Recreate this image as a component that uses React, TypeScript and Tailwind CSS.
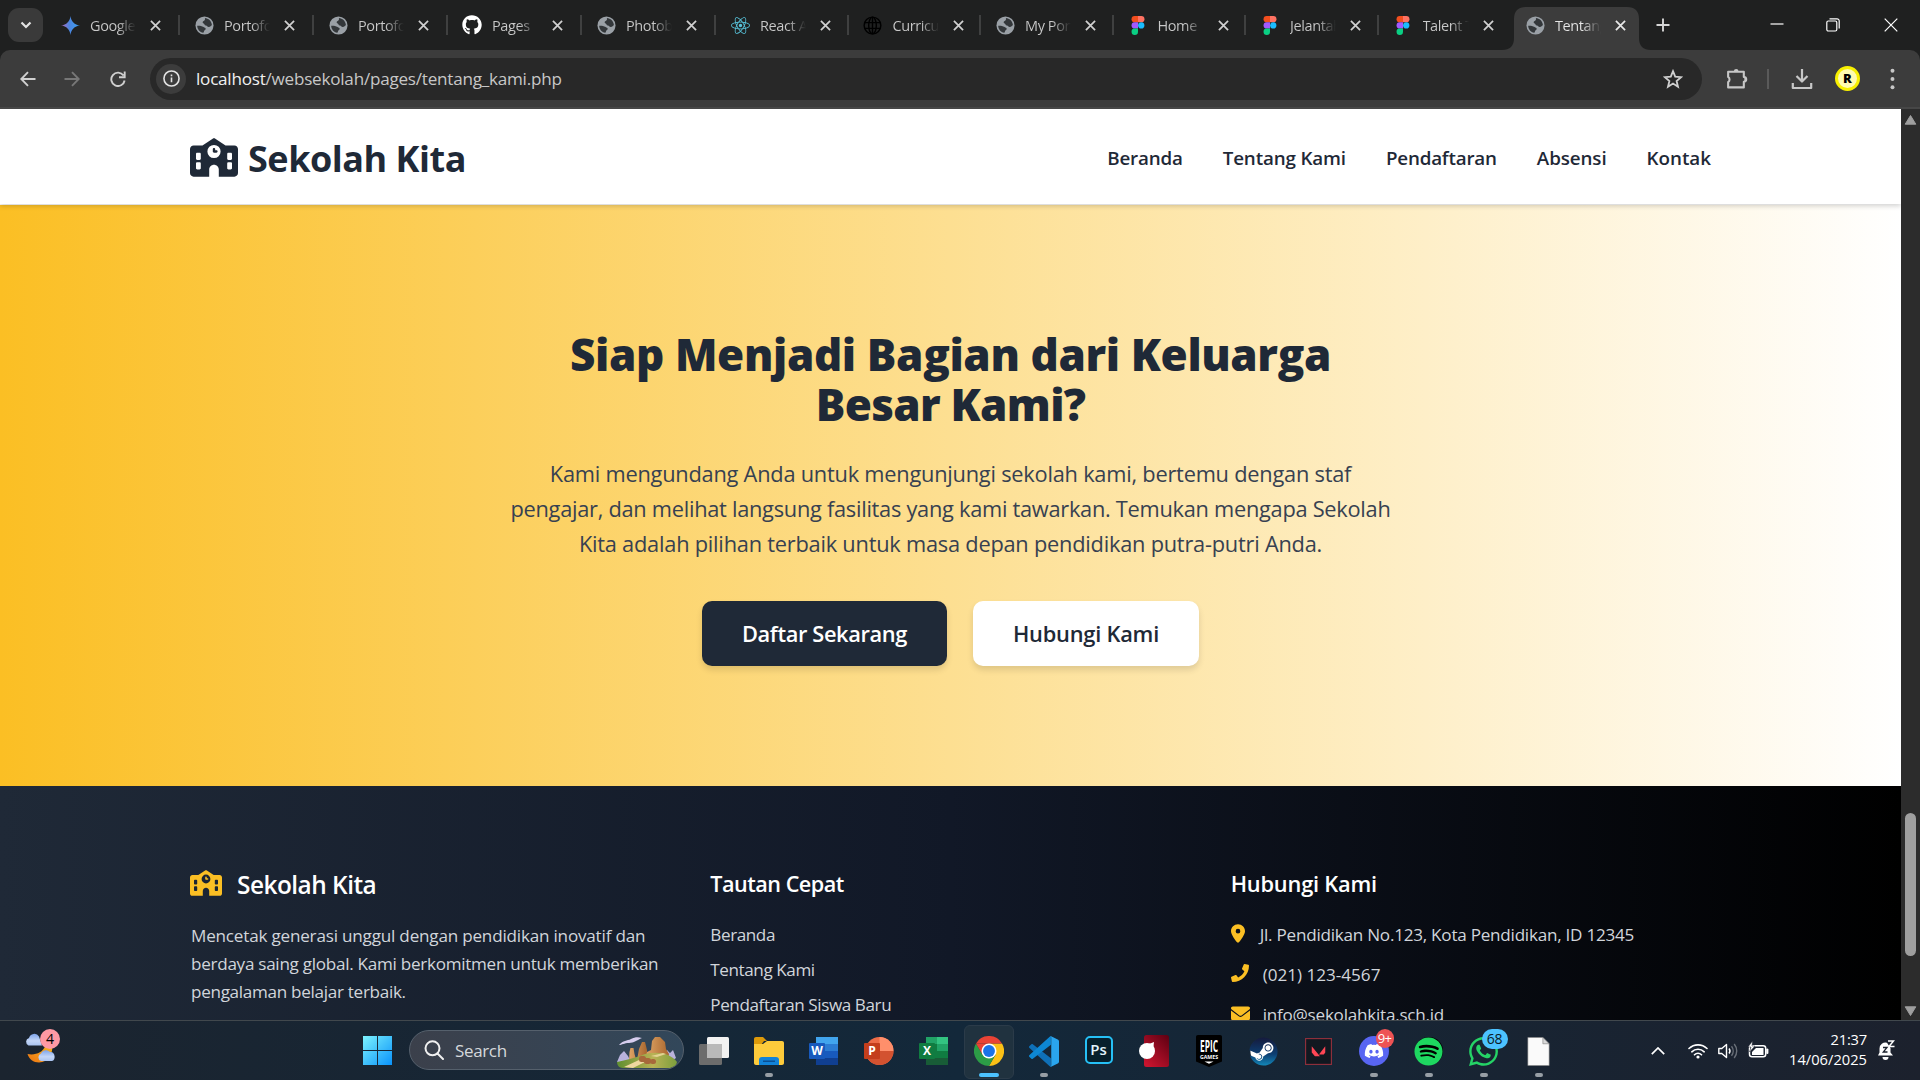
import type { ReactNode } from "react";
import { FaPhone } from "react-icons/fa";
import {
  FaSchool,
  FaLocationDot,
  FaEnvelope,
  FaGithub,
  FaReact,
  FaDiscord,
  FaSpotify,
  FaWhatsapp,
  FaSteam,
} from "react-icons/fa6";

/* ---------- Tab favicons ---------- */

const GlobeIcon = () => (
  <svg viewBox="0 0 20 20" className="size-[19px]">
    <circle cx="10" cy="10" r="9.5" fill="#9aa0a6" />
    <path
      d="M10.4 2.2c3.800.4 6.900 3.200 7.400 7.100-.8 1.500-2 2.300-3.400 2.200-1.600-.1-1.500-1.500-2.900-1.600-1.800-.1-1.300-1.700-2.400-2.100-1.200-.4-1.400-1.500-.4-2.200 1.300-.9 2.300-1.300 1.700-3.400z"
      fill="#33373a"
    />
    <path
      d="M2.300 10.200c2.300-.2 4.900.2 6.200 1.200 1.200 1 3 .7 2.700 2.300-.2 1.200-1.600 1.200-1.700 2.400-.1.700-.4 1.300-.9 1.600-3.500-.7-6.300-3.800-6.300-7.500z"
      fill="#33373a"
    />
  </svg>
);

const GeminiIcon = () => (
  <svg viewBox="0 0 20 20" className="size-[19px]">
    <defs>
      <linearGradient id="gem" x1="0" x2="1">
        <stop offset="0.1" stopColor="#9b6fc4" />
        <stop offset="0.45" stopColor="#4b86e0" />
        <stop offset="1" stopColor="#3ba0f0" />
      </linearGradient>
    </defs>
    <path d="M10 0c.7 5.800 4.200 9.300 10 10-5.800.7-9.300 4.200-10 10-.7-5.800-4.200-9.300-10-10 5.800-.7 9.300-4.200 10-10z" fill="url(#gem)" />
  </svg>
);

const FigmaIcon = () => (
  <svg viewBox="0 0 14 20" className="h-[19px] w-[14px]">
    <path d="M3.500 0H7v6.600H3.500a3.300 3.300 0 0 1 0-6.600z" fill="#f24e1e" />
    <path d="M7 0h3.500a3.300 3.300 0 0 1 0 6.600H7z" fill="#ff7262" />
    <path d="M3.500 6.600H7v6.600H3.500a3.300 3.300 0 0 1 0-6.600z" fill="#a259ff" />
    <circle cx="10.400" cy="9.900" r="3.300" fill="#1abcfe" />
    <path d="M3.500 13.200H7v3.400a3.400 3.400 0 1 1-3.500-3.400z" fill="#0acf83" />
  </svg>
);

const WireGlobe = () => (
  <svg viewBox="0 0 20 20" className="size-[19px]" fill="none" stroke="#000" strokeWidth="1.500">
    <circle cx="10" cy="10" r="8.800" />
    <ellipse cx="10" cy="10" rx="4" ry="8.800" />
    <path d="M10 1v18M1.500 7h17M1.500 13h17" />
  </svg>
);

const CloseIcon = ({ className }: { className: string }) => (
  <svg viewBox="0 0 12 12" className={className} stroke="currentColor" strokeWidth="1.900">
    <path d="M1 1l10 10M11 1L1 11" />
  </svg>
);

const tabs: { title: string; icon: ReactNode }[] = [
  { title: "Google Gemini", icon: <GeminiIcon /> },
  { title: "Portofolio", icon: <GlobeIcon /> },
  { title: "Portofolio", icon: <GlobeIcon /> },
  { title: "Pages", icon: <FaGithub className="size-[20px] text-white" /> },
  { title: "Photobooth", icon: <GlobeIcon /> },
  { title: "React App", icon: <FaReact className="size-[19px] text-[#58c4dc]" /> },
  { title: "Curriculum", icon: <WireGlobe /> },
  { title: "My Portfolio", icon: <GlobeIcon /> },
  { title: "Home", icon: <FigmaIcon /> },
  { title: "Jelantah", icon: <FigmaIcon /> },
  { title: "Talent Test", icon: <FigmaIcon /> },
  { title: "Tentang", icon: <GlobeIcon /> },
];

function TabBody({ title, icon, active }: { title: string; icon: ReactNode; active?: boolean }) {
  return (
    <>
      <span className="ml-[14px] flex w-5 justify-center">{icon}</span>
      <span
        className={`ml-[10px] w-[46px] overflow-hidden whitespace-nowrap bg-clip-text pt-px text-[14.500px] leading-6 tracking-[-0.400px] text-transparent ${
          active
            ? "bg-linear-to-r from-[#e6e6e6] from-60% to-[#3c3c3c]"
            : "bg-linear-to-r from-[#c9c9c9] from-60% to-[#1f2020]"
        }`}
      >
        {title}
      </span>
      <CloseIcon className={`ml-[14px] size-[11px] ${active ? "text-[#e8e8e8]" : "text-[#d0d0d0]"}`} />
    </>
  );
}

function TabStrip() {
  return (
    <div className="flex h-[50px] w-full bg-[#1f2020]">
      <div className="flex w-[46px] shrink-0 items-center pl-2">
        <div className="flex h-[34px] w-[35px] items-center justify-center rounded-[11px] bg-[#3a3a3a]">
          <svg viewBox="0 0 12 8" className="h-[8px] w-[12px]" fill="none" stroke="#e3e3e3" strokeWidth="2.200">
            <path d="M1.500 1.500L6 6l4.500-4.500" />
          </svg>
        </div>
      </div>
      {tabs.map((t, i) =>
        i < tabs.length - 1 ? (
          <div key={i} className={`flex h-[50px] shrink-0 items-center ${i < 5 ? "w-[134px]" : "w-[132.500px]"}`}>
            <TabBody {...t} />
            <span className={`ml-auto h-5 w-[2px] ${i < tabs.length - 2 ? "bg-[#3f4040]" : "bg-transparent"}`} />
          </div>
        ) : (
          <div key={i} className="relative flex h-[50px] w-[133px] shrink-0 items-center">
            <svg viewBox="0 0 149 43" className="absolute bottom-0 left-[-9px] h-[43px] w-[149px]">
              <path d="M0 43C8 43 12 39 12 31V12C12 4 16 0 24 0h101c8 0 12 4 12 12v19c0 8 4 12 12 12z" fill="#3c3c3c" />
            </svg>
            <div className="relative flex w-full items-center">
              <TabBody {...t} active />
            </div>
          </div>
        ),
      )}
      <div className="flex flex-1 items-center">
        <svg viewBox="0 0 14 14" className="ml-[12px] size-[14px]" stroke="#d6d6d6" strokeWidth="1.900">
          <path d="M7 0.500v13M0.500 7h13" />
        </svg>
        <svg viewBox="0 0 14 14" className="ml-[100px] size-[14px]" stroke="#fff" strokeWidth="1.200">
          <path d="M0.500 6h13" />
        </svg>
        <svg viewBox="0 0 14 14" className="ml-[42px] size-[14px]" fill="none" stroke="#fff" strokeWidth="1.200">
          <rect x="0.800" y="3" width="10" height="10" rx="1.500" />
          <path d="M3.500 0.800h7.500a2.200 2.200 0 0 1 2.200 2.200v7.500" />
        </svg>
        <svg viewBox="0 0 14 14" className="ml-[44px] size-[14px]" stroke="#fff" strokeWidth="1.200">
          <path d="M0.700 0.700l12.600 12.600M13.300 0.700L0.700 13.300" />
        </svg>
      </div>
    </div>
  );
}

function Toolbar() {
  return (
    <div className="w-full bg-[#1f2020]">
      <div className="flex h-[59px] w-full items-center rounded-t-[10px] border-b-2 border-[#474747] bg-[#3c3c3c]">
        <svg viewBox="0 0 16 16" className="ml-[20px] size-[16px]" fill="none" stroke="#d0d0d0" strokeWidth="1.900">
          <path d="M15.500 8H1.500M8 1.200L1.300 8 8 14.800" />
        </svg>
        <svg viewBox="0 0 16 16" className="ml-[28px] size-[16px]" fill="none" stroke="#777" strokeWidth="1.900">
          <path d="M0.500 8h14M8 1.200L14.700 8 8 14.800" />
        </svg>
        <svg viewBox="0 0 16 16" className="ml-[30px] size-[16px]" fill="none" stroke="#d0d0d0" strokeWidth="1.900">
          <path d="M13.500 4.500A6.700 6.700 0 1 0 14.600 9.500M14.700 0.500v5.700H9" />
        </svg>
        <div className="ml-[24px] flex h-[42px] w-[1552px] items-center rounded-full bg-[#282828]">
          <div className="ml-[6px] flex size-[30px] items-center justify-center rounded-full bg-[#3c3c3c]">
            <svg viewBox="0 0 18 18" className="size-[17px]" fill="none" stroke="#e3e3e3" strokeWidth="1.700">
              <circle cx="9" cy="9" r="8" />
              <path d="M9 8v5M9 4.800v1.700" />
            </svg>
          </div>
          <p className="ml-[10px] flex-1 whitespace-nowrap pt-px text-[17.100px] leading-6 tracking-[-0.230px] text-[#c7c7c7]">
            <span className="text-[#f1f1f1]">localhost</span>/websekolah/pages/tentang_kami.php
          </p>
          <svg viewBox="0 0 20 20" className="mr-[19px] size-[20px]" fill="none" stroke="#d0d0d0" strokeWidth="1.800">
            <path d="M10 2.200l2.200 5.500 5.900.5-4.500 3.800 1.400 5.700L10 14.600l-5 3.100 1.400-5.700L1.900 8.200l5.900-.5z" />
          </svg>
        </div>
        <svg viewBox="0 0 22 22" className="ml-[23px] size-[23px]" fill="none" stroke="#c7c7c7" strokeWidth="2">
          <path d="M3 4.500h15v5a2.200 2.200 0 0 1 0 4.600v5.400H3v-5a3 3 0 0 0 0-5z" strokeLinejoin="round" />
          <path d="M8.500 4a2.200 2.200 0 0 1 4.400 0zM18.500 9.700a2.200 2.200 0 0 1 0 4.200z" fill="#c7c7c7" stroke="none" />
        </svg>
        <span className="ml-[19px] h-5 w-[2px] bg-[#5a5a5a]" />
        <svg viewBox="0 0 22 22" className="ml-[22px] size-[22px]" fill="none" stroke="#c7c7c7" strokeWidth="2.200">
          <path d="M11 1v12M5.500 8l5.500 5.500L16.500 8M1.800 15v5h18.400v-5" strokeLinejoin="round" />
        </svg>
        <div className="ml-[22px] flex size-[25px] items-center justify-center rounded-full border-[3px] border-[#f8f000] bg-[#fffbb0] text-[13px] font-extrabold text-black">
          R
        </div>
        <svg viewBox="0 0 4 20" className="ml-[30px] h-[22px] w-[5px]" fill="#c7c7c7">
          <circle cx="2" cy="2.500" r="1.800" />
          <circle cx="2" cy="10" r="1.800" />
          <circle cx="2" cy="17.500" r="1.800" />
        </svg>
      </div>
    </div>
  );
}

/* ---------- Web page ---------- */

function SiteHeader() {
  return (
    <header className="relative z-10 flex h-[95px] w-full shrink-0 items-center justify-between bg-white px-[190px] pt-[2px] text-[#1f2937] shadow-[0_2px_5px_rgba(0,0,0,0.180)]">
      <div className="flex items-center">
        <FaSchool className="h-[39px] w-[48px]" />
        <span className="ml-[10px] pt-[2px] text-[36px] font-bold leading-[44px] tracking-[-0.480px]">Sekolah Kita</span>
      </div>
      <nav className="flex gap-[40px] pt-px text-[18.800px] font-semibold leading-7">
        <a className="tracking-[-0.180px]">Beranda</a>
        <a className="tracking-[-0.150px]">Tentang Kami</a>
        <a className="tracking-[-0.180px]">Pendaftaran</a>
        <a className="tracking-[-0.100px]">Absensi</a>
        <a className="tracking-normal">Kontak</a>
      </nav>
    </header>
  );
}

function Hero() {
  return (
    <section className="flex h-[581px] w-full shrink-0 flex-col items-center bg-linear-to-r/srgb from-[#fbbf24] to-white pt-[124px] text-center">
      <h1 className="whitespace-nowrap text-[44px] font-extrabold leading-[50px] tracking-[-0.380px] text-[#1f2937]">
        Siap Menjadi Bagian dari Keluarga
        <br />
        <span className="tracking-[-0.700px]">Besar Kami?</span>
      </h1>
      <p className="mt-[27px] whitespace-nowrap text-[21.800px] leading-[35px] tracking-[-0.230px] text-[#374151]">
        Kami mengundang Anda untuk mengunjungi sekolah kami, bertemu dengan staf
        <br />
        <span className="tracking-[-0.275px]">
          pengajar, dan melihat langsung fasilitas yang kami tawarkan. Temukan mengapa Sekolah
        </span>
        <br />
        Kita adalah pilihan terbaik untuk masa depan pendidikan putra-putri Anda.
      </p>
      <div className="mt-[40px] flex gap-[26px] whitespace-nowrap text-[21.800px] font-semibold">
        <a className="flex h-[65px] w-[245px] items-center justify-center rounded-[10px] bg-[#1f2937] pt-[2px] tracking-[-0.360px] text-white shadow-[0_4px_6px_rgba(0,0,0,0.120)]">
          Daftar Sekarang
        </a>
        <a className="flex h-[65px] w-[226px] items-center justify-center rounded-[10px] bg-white pt-[2px] tracking-[-0.220px] text-[#1f2937] shadow-[0_4px_6px_rgba(0,0,0,0.120)]">
          Hubungi Kami
        </a>
      </div>
    </section>
  );
}

function SiteFooter() {
  return (
    <footer className="grid w-full flex-1 grid-cols-3 gap-[40px] whitespace-nowrap bg-linear-to-r/srgb from-[#1f2937] via-[#111827] to-black px-[190px] pt-[80px] text-[17.100px] text-[#d1d5db]">
      <div>
        <div className="flex h-[38px] items-center">
          <FaSchool className="mb-[4px] h-[26px] w-[32px] text-[#fbbf24]" />
          <span className="ml-[15px] text-[24.400px] font-semibold leading-[38px] tracking-[-0.500px] text-white">
            Sekolah Kita
          </span>
        </div>
        <p className="mt-[18px] pl-px leading-[28px] tracking-[-0.200px]">
          Mencetak generasi unggul dengan pendidikan inovatif dan
          <br />
          <span className="tracking-[-0.280px]">berdaya saing global. Kami berkomitmen untuk memberikan</span>
          <br />
          <span className="tracking-[-0.300px]">pengalaman belajar terbaik.</span>
        </p>
      </div>
      <div>
        <h3 className="text-[21.600px] font-semibold leading-[35px] tracking-[-0.500px] text-white">Tautan Cepat</h3>
        <ul className="mt-[20px] flex flex-col gap-[7px] leading-[28px] tracking-[-0.420px]">
          <li>Beranda</li>
          <li>Tentang Kami</li>
          <li>Pendaftaran Siswa Baru</li>
        </ul>
      </div>
      <div>
        <h3 className="text-[21.800px] font-semibold leading-[35px] tracking-[-0.200px] text-white">Hubungi Kami</h3>
        <ul className="mt-[20px] flex flex-col gap-[12px] leading-[28px] tracking-[-0.240px]">
          <li className="flex items-center">
            <FaLocationDot className="mb-[3px] h-[19px] w-[14px] text-[#fbbf24]" />
            <span className="ml-[15px]">Jl. Pendidikan No.123, Kota Pendidikan, ID 12345</span>
          </li>
          <li className="flex items-center">
            <FaPhone className="mb-[5px] size-[18px] text-[#fbbf24]" />
            <span className="ml-[14px] tracking-normal">(021) 123-4567</span>
          </li>
          <li className="flex items-center">
            <FaEnvelope className="mb-[4px] size-[19px] text-[#fbbf24]" />
            <span className="ml-[13px]">info@sekolahkita.sch.id</span>
          </li>
        </ul>
      </div>
    </footer>
  );
}

function Scrollbar() {
  return (
    <div className="flex w-[19px] shrink-0 flex-col items-center bg-[#2c2c2c]">
      <svg viewBox="0 0 12 10" className="mt-[6px] h-[10px] w-[13px]">
        <path d="M6 0.500l5.300 8.700H0.700z" fill="#9f9f9f" stroke="#9f9f9f" strokeLinejoin="round" />
      </svg>
      <div className="mt-[688px] h-[143px] w-[11px] rounded-full bg-[#9f9f9f]" />
      <svg viewBox="0 0 12 10" className="mt-[50px] h-[10px] w-[13px]">
        <path d="M6 9.500l5.300-8.700H0.700z" fill="#9f9f9f" stroke="#9f9f9f" strokeLinejoin="round" />
      </svg>
    </div>
  );
}

/* ---------- Taskbar icons ---------- */

const WeatherIcon = () => (
  <svg viewBox="0 0 34 36" className="h-[36px] w-[34px]">
    <defs>
      <linearGradient id="cloud" x1="0" y1="0" x2="0" y2="1">
        <stop offset="0" stopColor="#7ea4ea" />
        <stop offset="0.6" stopColor="#c3d6f7" />
        <stop offset="1" stopColor="#a9c3f0" />
      </linearGradient>
      <linearGradient id="moon" x1="1" y1="0" x2="0" y2="1">
        <stop offset="0" stopColor="#f6b823" />
        <stop offset="1" stopColor="#ec7412" />
      </linearGradient>
    </defs>
    <path d="M2.500 26c8 1.500 15-1.500 17.500-7.500l7.500-2C28 26 23 34.500 14 34.500 8.500 34.500 4 31 2.500 26z" fill="url(#moon)" />
    <path d="M3.500 17.500a4 4 0 0 1 .5-7.500 5.500 5.500 0 0 1 10-1.500l3 9z" fill="url(#cloud)" />
    <path d="M16 33a4 4 0 0 1 0-7.500c1-3 5.500-5 9-1.500 5-1 6.500 8 2 9z" fill="url(#cloud)" />
  </svg>
);

const WindowsIcon = () => (
  <svg viewBox="0 0 30 30" className="size-[29px]">
    <defs>
      <linearGradient id="win" x1="0" y1="0" x2="1" y2="1">
        <stop offset="0" stopColor="#7df3ff" />
        <stop offset="0.5" stopColor="#42c2fb" />
        <stop offset="1" stopColor="#0a93fb" />
      </linearGradient>
    </defs>
    <path d="M0 0h14.500v14.500H0zM15.500 0H30v14.500H15.500zM0 15.500h14.500V30H0zM15.500 15.500H30V30H15.500z" fill="url(#win)" />
  </svg>
);

const SearchScene = () => (
  <svg viewBox="0 0 60 32" className="h-[32px] w-[60px]">
    <defs>
      <linearGradient id="rock" x1="0" x2="1">
        <stop offset="0" stopColor="#e0a566" />
        <stop offset="1" stopColor="#a9672f" />
      </linearGradient>
      <linearGradient id="grass" x1="0" x2="1">
        <stop offset="0" stopColor="#5f8f2f" />
        <stop offset="0.6" stopColor="#b9b255" />
        <stop offset="1" stopColor="#7c9f3c" />
      </linearGradient>
    </defs>
    <path d="M2 9C6 4 10 5 14 3s7-2 11-1c-5 2-8 5-13 5S5 9 2 9z" fill="#d6cdee" />
    <path d="M0 26l3-7 4-4 4 5 3 6zM46 19l4-5 3 3 3-3 3 8-6 4z" fill="#b9b2dc" />
    <path d="M12 25l.5-9 1-4h3l1 6 2 7zM20 24l2-11 3-7h3l2 8v10z" fill="url(#rock)" />
    <path d="M29 20l1-4 4-2 1-9 3-4h5l5 5 1 7 3 5-1 4z" fill="url(#rock)" />
    <path d="M0 26c9-2 18-4 28-8 14-3 26 0 32 8-1 4-4 6-8 6H6c-4 0-6-3-6-6z" fill="url(#grass)" />
    <path d="M7 31l15-7 8 1-14 7z" fill="#efd7a0" />
    <path d="M34 20l12-3 3 1-9 3z" fill="#e3d393" />
    <g fill="#a7683b">
      <rect x="22" y="20" width="7" height="6" rx="2.500" />
      <rect x="27" y="22" width="7" height="6" rx="2.500" />
      <rect x="33" y="23" width="6" height="5" rx="2.500" />
    </g>
  </svg>
);

const TaskViewIcon = () => (
  <svg viewBox="0 0 30 30" className="size-[30px]">
    <rect x="8" y="1" width="22" height="21" rx="1.500" fill="#f2f2f2" />
    <rect x="0" y="8" width="23" height="21" rx="1.500" fill="#6c6c6c" />
    <path d="M8 8h15v14H8z" fill="#b9b9b9" />
  </svg>
);

const FolderIcon = () => (
  <svg viewBox="0 0 30 28" className="h-[28px] w-[30px]">
    <path d="M0 2C0 .8.8 0 2 0h7l4 4h-3l-3 4H0z" fill="#dd9a0a" />
    <path d="M0 7h9l4-3h15c1.200 0 2 .8 2 2v20c0 1.200-.8 2-2 2H2c-1.200 0-2-.8-2-2z" fill="#fdcb3b" />
    <path d="M5 28v-5c0-2 1-3 3-3h14c2 0 3 1 3 3v5z" fill="#1283d9" />
    <rect x="9" y="23.500" width="12" height="1.500" fill="#0a4f94" />
  </svg>
);

function OfficeIcon({ letter, kind }: { letter: string; kind: "word" | "ppt" | "excel" }) {
  return (
    <svg viewBox="0 0 30 28" className="h-[28px] w-[30px]">
      {kind === "word" && (
        <>
          <path d="M7 0h22v7H7z" fill="#41a5ee" />
          <path d="M7 7h22v7H7z" fill="#2b7cd3" />
          <path d="M7 14h22v7H7z" fill="#185abd" />
          <path d="M7 21h22v7H7z" fill="#103f91" />
          <rect x="0" y="6" width="16" height="16" rx="1" fill="#185abd" />
        </>
      )}
      {kind === "ppt" && (
        <>
          <circle cx="15.500" cy="14" r="14" fill="#ed6c47" />
          <path d="M15.500 0a14 14 0 0 1 14 14h-14z" fill="#ff8f6b" />
          <path d="M1.500 14h28a14 14 0 0 1-28 0z" fill="#d35230" />
          <rect x="0" y="6" width="16" height="16" rx="1" fill="#c43e1c" />
        </>
      )}
      {kind === "excel" && (
        <>
          <path d="M7 0h11v7H7z" fill="#21a366" />
          <path d="M18 0h11v7H18z" fill="#33c481" />
          <path d="M7 7h11v14H7z" fill="#107c41" />
          <path d="M18 7h11v7H18z" fill="#21a366" />
          <path d="M18 14h11v7H18z" fill="#107c41" />
          <path d="M7 21h22v7H7z" fill="#185c37" />
          <rect x="0" y="6" width="16" height="16" rx="1" fill="#107c41" />
        </>
      )}
      <text x="8" y="18" textAnchor="middle" fontSize="12" fontWeight="700" fill="#fff">
        {letter}
      </text>
    </svg>
  );
}

const ChromeIcon = () => (
  <svg viewBox="0 0 48 48" className="size-[30px]">
    <path d="M44.800 12A24 24 0 0 1 24 48l10.400-18L24 12z" fill="#fbc116" />
    <path d="M3.200 12A24 24 0 0 0 24 48l10.400-18L13.600 30z" fill="#2c9c46" />
    <path d="M3.200 12A24 24 0 0 1 44.800 12H24z" fill="#ea4335" />
    <path d="M3.200 12l10.400 18L24 24V12z" fill="#ea4335" />
    <circle cx="24" cy="24" r="12" fill="#fff" />
    <circle cx="24" cy="24" r="9.500" fill="#1a73e8" />
  </svg>
);

const VSCodeIcon = () => (
  <svg viewBox="0 0 100 100" className="size-[31px]">
    <path d="M4 33l7-6c1.500-1.200 3-1.200 4.500 0L74 72v27c-2 0-3.500-.8-5-2L4 38c-1.500-1.500-1.500-3.500 0-5z" fill="#0f70b7" />
    <path d="M4 67l7 6c1.500 1.200 3 1.200 4.500 0L74 28V1c-2 0-3.500.8-5 2L4 62c-1.500 1.500-1.500 3.500 0 5z" fill="#0d87d3" />
    <path d="M71 1.500c1.500-.7 3-.6 5 .3l20 9.700c2 1 4 3 4 5.500v66c0 2.500-2 4.500-4 5.500l-20 9.700c-2 .9-3.500 1-5 .3 2 0 4-1.500 4-4V5.500c0-2.500-2-4-4-4z" fill="#2aa5ee" />
  </svg>
);

const PhotoshopIcon = () => (
  <div className="mb-[3px] flex size-[28px] items-center justify-center rounded-[5px] border-2 border-[#26c0f5] bg-[#07202c] text-[15px] font-semibold leading-none text-[#e2f4fc]">
    Ps
  </div>
);

const RedCardIcon = () => (
  <svg viewBox="0 0 30 32" className="h-[32px] w-[30px]">
    <defs>
      <linearGradient id="red" x1="1" y1="0" x2="0.2" y2="1">
        <stop offset="0" stopColor="#5c0012" />
        <stop offset="1" stopColor="#c9142e" />
      </linearGradient>
    </defs>
    <rect x="5" y="0" width="25" height="32" rx="2.500" fill="url(#red)" />
    <circle cx="8" cy="16" r="8" fill="#fff" />
    <path d="M10 9l5-2-1 8z" fill="#fff" />
  </svg>
);

const EpicIcon = () => (
  <svg viewBox="0 0 26 32" className="h-[32px] w-[26px]">
    <path d="M2 0h22c1.300 0 2 .8 2 2v24.500L13 32 0 26.500V2C0 .8.700 0 2 0z" fill="#000" />
    <path d="M8.500 26.500h9L13 28.700z" fill="#fff" />
    <text x="13" y="16.500" textAnchor="middle" fontSize="16" fontWeight="700" textLength="18" lengthAdjust="spacingAndGlyphs" fill="#fff">
      EPIC
    </text>
    <text x="13" y="23.500" textAnchor="middle" fontSize="5.500" fontWeight="700" textLength="18" lengthAdjust="spacingAndGlyphs" fill="#fff">
      GAMES
    </text>
  </svg>
);

const SteamIcon = () => (
  <svg viewBox="0 0 30 30" className="size-[29px]">
    <defs>
      <linearGradient id="steam" x1="0" y1="0" x2="0" y2="1">
        <stop offset="0" stopColor="#151a3c" />
        <stop offset="0.6" stopColor="#0d3f73" />
        <stop offset="1" stopColor="#1387b8" />
      </linearGradient>
    </defs>
    <circle cx="15" cy="15" r="13.500" fill="#fff" />
    <FaSteam size={30} fill="url(#steam)" />
  </svg>
);

const ValorantIcon = () => (
  <svg viewBox="0 0 28 28" className="size-[27px]">
    <rect x="0.600" y="0.600" width="26.800" height="26.800" fill="#111820" stroke="#8d2f3b" strokeWidth="1.200" />
    <path d="M7 8.500l8.500 10.500h-5.200L7 15zM21 8.500V15l-1.500 2h-5z" fill="#ff4655" />
  </svg>
);

const DocIcon = () => (
  <svg viewBox="0 0 23 30" className="h-[29px] w-[23px]">
    <path d="M0.500 0.500H16L22.500 7v22.500h-22z" fill="#fafafa" stroke="#888" strokeWidth="0.600" />
    <path d="M16 0.500V7h6.500z" fill="#d9d9d9" stroke="#777" strokeWidth="0.600" />
  </svg>
);

const apps: { icon: ReactNode; running?: boolean; active?: boolean; badge?: ReactNode }[] = [
  { icon: <TaskViewIcon /> },
  { icon: <FolderIcon />, running: true },
  { icon: <OfficeIcon letter="W" kind="word" /> },
  { icon: <OfficeIcon letter="P" kind="ppt" /> },
  { icon: <OfficeIcon letter="X" kind="excel" /> },
  { icon: <ChromeIcon />, active: true },
  { icon: <VSCodeIcon />, running: true },
  { icon: <PhotoshopIcon /> },
  { icon: <RedCardIcon /> },
  { icon: <EpicIcon /> },
  { icon: <SteamIcon /> },
  { icon: <ValorantIcon /> },
  {
    icon: (
      <span className="flex size-[30px] items-center justify-center rounded-full bg-[#5865f2]">
        <FaDiscord className="size-[20px] text-white" />
      </span>
    ),
    running: true,
    badge: (
      <span className="absolute left-[26px] top-[-3px] flex h-[19px] w-[18px] items-center justify-center rounded-full bg-[#ee5354] text-[13px] leading-none tracking-[-0.800px] text-white">
        9+
      </span>
    ),
  },
  {
    icon: (
      <span className="flex size-[28px] items-center justify-center rounded-full bg-black">
        <FaSpotify className="size-[29px] shrink-0 text-[#1ed760]" />
      </span>
    ),
    running: true,
  },
  {
    icon: <FaWhatsapp className="size-[33px] text-[#25d366]" />,
    running: true,
    badge: (
      <span className="absolute left-[22px] top-[-3px] flex h-[20px] w-[26px] items-center justify-center rounded-full bg-[#4cc2ff] text-[14px] leading-none tracking-[-0.300px] text-[#0b1a26]">
        68
      </span>
    ),
  },
  { icon: <DocIcon />, running: true },
];

function Taskbar() {
  return (
    <div className="flex h-[60px] w-full items-start border-t border-[#41484d] bg-linear-to-r/srgb from-[#1b242f] via-[#13283a] to-[#1c212d]">
      <div className="relative ml-[25px] mt-[7px] w-[40px]">
        <WeatherIcon />
        <span className="absolute left-[15px] top-px flex size-[20px] items-center justify-center rounded-full bg-[#ff99a4] text-[14px] leading-none text-black">
          4
        </span>
      </div>
      <div className="ml-[298px] mt-[15px]">
        <WindowsIcon />
      </div>
      <div className="ml-[17px] mt-[9px] flex h-[40px] w-[275px] items-center overflow-hidden rounded-full border border-[#55606c] bg-linear-to-r from-[#3b404b] to-[#32475a]">
        <svg viewBox="0 0 20 20" className="ml-[14px] size-[20px]" fill="none" stroke="#f0f0f0" strokeWidth="2">
          <circle cx="8.500" cy="8.300" r="7" />
          <path d="M13.500 13.500l5.500 5.500" strokeLinecap="round" />
        </svg>
        <span className="ml-[11px] flex-1 pt-px text-[17px] leading-6 tracking-[-0.350px] text-[#d5d8db]">Search</span>
        <span className="mr-[6px] mt-[3px]">
          <SearchScene />
        </span>
      </div>
      <div className="ml-[2px] mt-[4px] flex">
        {apps.map((a, i) => (
          <div key={i} className="flex w-[55px] justify-center">
            <div
              className={`relative flex h-[54px] w-[50px] flex-col items-center rounded-[6px] ${
                a.active ? "border border-[#2b3b49] bg-[#20323f]" : "border border-transparent"
              }`}
            >
              {a.badge && <span className="absolute left-0 top-[6px] z-10 size-0">{a.badge}</span>}
              <span className="flex h-[50px] items-center">{a.icon}</span>
              {a.active && <span className="-mt-[3px] h-[4px] w-[20px] shrink-0 rounded-full bg-[#4cc2ff]" />}
              {a.running && <span className="-mt-[3px] h-[4px] w-[8px] shrink-0 rounded-full bg-[#979ea5]" />}
            </div>
          </div>
        ))}
      </div>
      <div className="ml-auto flex h-[59px] items-center pr-[25px]">
        <svg viewBox="0 0 14 8" className="h-[8px] w-[14px]" fill="none" stroke="#fff" strokeWidth="1.700">
          <path d="M0.800 7.200L7 1l6.200 6.200" />
        </svg>
        <svg viewBox="0 0 20 16" className="ml-[23px] h-[16px] w-[20px]" fill="none" stroke="#fff" strokeWidth="1.600">
          <path d="M1 5.500a13 13 0 0 1 18 0M3.800 8.800a9 9 0 0 1 12.400 0M6.500 11.800a5 5 0 0 1 7 0" strokeLinecap="round" />
          <circle cx="10" cy="14" r="1.600" fill="#fff" stroke="none" />
        </svg>
        <svg viewBox="0 0 20 16" className="ml-[10px] h-[16px] w-[20px]" fill="none" stroke="#fff" strokeWidth="1.400">
          <path d="M0.800 5.500v5h3L8.500 14.500v-13L3.800 5.500z" strokeLinejoin="round" />
          <path d="M11 5.500a4 4 0 0 1 0 5" />
          <path d="M13.500 3.300a7.500 7.500 0 0 1 0 9.400M16.200 1a11 11 0 0 1 0 14" stroke="#6a7079" />
        </svg>
        <svg viewBox="0 0 21 17" className="mb-[3px] ml-[10px] h-[17px] w-[21px]">
          <rect x="1.500" y="4.800" width="16.200" height="11" rx="2.500" fill="none" stroke="#fff" strokeWidth="1.500" />
          <path d="M4 14V11l4-4h7.500v7z" fill="#fff" />
          <path d="M18.700 8h1.300v4.500h-1.300z" fill="#fff" stroke="#fff" strokeWidth="0.800" />
          <path d="M4.500 0L0 6h3l-1.500 5L7 5H4z" fill="#fff" stroke="#1c222e" strokeWidth="0.500" />
        </svg>
        <div className="mb-[4px] ml-[18px] w-[80px] text-right text-[14.700px] leading-[20px] text-white">
          <div className="tracking-[-0.200px]">21:37</div>
          <div>14/06/2025</div>
        </div>
        <svg viewBox="0 0 18 20" className="mb-[2px] ml-[10px] h-[20px] w-[18px]">
          <path d="M1 15.500l1.500-3V8.500a6 6 0 0 1 7.500-5.800L13.500 8v4.500l2.500 3z" fill="#fff" />
          <path d="M5.500 17h6a3 3 0 0 1-6 0z" fill="#fff" />
          <path d="M11 1h5.500L12 6.500h5.500" fill="none" stroke="#fff" strokeWidth="1.500" />
          <path d="M6 7.500h4L6.300 12H10.500" fill="none" stroke="#1c222e" strokeWidth="1.300" />
        </svg>
      </div>
    </div>
  );
}

export default function App() {
  return (
    <div className="flex h-[1080px] w-[1920px] flex-col overflow-hidden bg-black font-['Open_Sans','Noto_Sans',sans-serif]">
      <TabStrip />
      <Toolbar />
      <div className="flex h-[911px] w-full overflow-hidden">
        <main className="flex h-[911px] w-[1901px] flex-col overflow-hidden bg-white">
          <SiteHeader />
          <div className="mt-px flex flex-1 flex-col">
            <Hero />
            <SiteFooter />
          </div>
        </main>
        <Scrollbar />
      </div>
      <Taskbar />
    </div>
  );
}
